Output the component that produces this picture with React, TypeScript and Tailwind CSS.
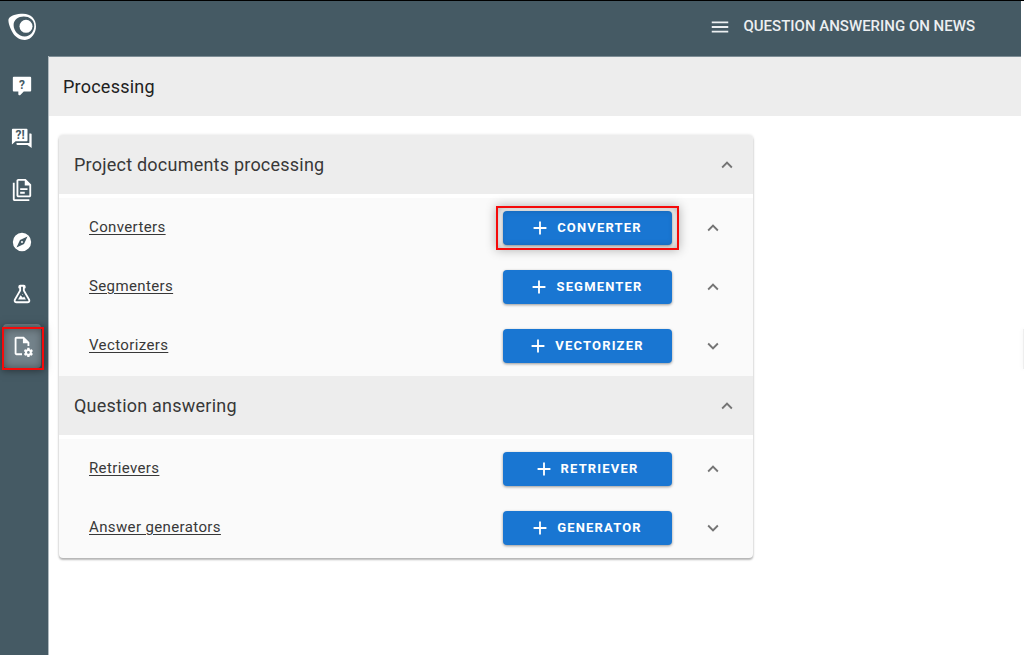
import React, { useState } from 'react';

interface StepItem { title: string; action: string; expanded: boolean; }
interface StepGroup { title: string; items: StepItem[]; }

const GROUPS: StepGroup[] = [
  { title: 'Project documents processing', items: [
    { title: 'Converters', action: 'Converter', expanded: true },
    { title: 'Segmenters', action: 'Segmenter', expanded: true },
    { title: 'Vectorizers', action: 'Vectorizer', expanded: false }
  ] },
  { title: 'Question answering', items: [
    { title: 'Retrievers', action: 'Retriever', expanded: true },
    { title: 'Answer generators', action: 'Generator', expanded: false }
  ] }
];

const ICONS = {
  menu: 'M3,6H21V8H3V6M3,11H21V13H3V11M3,16H21V18H3V16Z',
  plus: 'M19,13H13V19H11V13H5V11H11V5H13V11H19V13Z',
  up: 'M7.41,15.41L12,10.83L16.59,15.41L18,14L12,8L6,14L7.41,15.41Z',
  down: 'M7.41,8.58L12,13.17L16.59,8.58L18,10L12,16L6,10L7.41,8.58Z',
  comment: 'M3,2A1,1 0 0,0 2,3V17A1,1 0 0,0 3,18H8V21A1,1 0 0,0 9,22H9.5C9.75,22 10,21.9 10.2,21.71L13.9,18H21A1,1 0 0,0 22,17V3A1,1 0 0,0 21,2H3Z',
  forum: 'M2,2A1,1 0 0,0 1,3V19L5,15.500H17A1,1 0 0,0 18,14.500V3A1,1 0 0,0 17,2H2M20,7V17.500H6V18.500A1,1 0 0,0 7,19.500H18L22.500,23V8A1,1 0 0,0 21.500,7H20Z',
  documents: 'M16 0H8C6.9 0 6 .9 6 2V18C6 19.1 6.9 20 8 20H20C21.1 20 22 19.1 22 18V6L16 0M20 18H8V2H15V7H20V18M4 4V22H20V24H4C2.9 24 2 23.1 2 22V4H4M10 10V12H18V10H10M10 14V16H15V14H10Z',
  compass: 'M14.19,14.19L6,18L9.81,9.81L18,6M12,2A10,10 0 0,0 2,12A10,10 0 0,0 12,22A10,10 0 0,0 22,12A10,10 0 0,0 12,2M12,10.9A1.1,1.1 0 0,0 10.9,12A1.1,1.1 0 0,0 12,13.1A1.1,1.1 0 0,0 13.1,12A1.1,1.1 0 0,0 12,10.9Z',
  flask: 'M5,19A1,1 0 0,0 6,20H18A1,1 0 0,0 19,19C19,18.79 18.93,18.59 18.82,18.43L13,8.35V4H11V8.35L5.18,18.43C5.07,18.59 5,18.79 5,19M6,22A3,3 0 0,1 3,19C3,18.4 3.18,17.84 3.5,17.37L9,7.81V6A1,1 0 0,1 8,5V4A2,2 0 0,1 10,2H14A2,2 0 0,1 16,4V5A1,1 0 0,1 15,6V7.81L20.5,17.37C20.82,17.84 21,18.4 21,19A3,3 0 0,1 18,22H6M13,16L14.34,14.66L16.27,18H7.73L10.39,13.39L13,16M12.5,12A0.5,0.5 0 0,1 13,12.5A0.5,0.5 0 0,1 12.5,13A0.5,0.5 0 0,1 12,12.5A0.5,0.5 0 0,1 12.5,12Z',
  fileCog: 'M6 2C4.89 2 4 2.9 4 4V20C4 21.11 4.89 22 6 22H12V20H6V4H13V9H18V12H20V8L14 2M18 14C17.87 14 17.76 14.09 17.74 14.21L17.55 15.53C17.25 15.66 16.96 15.82 16.7 16L15.46 15.5C15.35 15.5 15.22 15.5 15.15 15.63L14.15 17.36C14.09 17.47 14.11 17.6 14.21 17.68L15.27 18.5C15.25 18.67 15.24 18.83 15.24 19C15.24 19.17 15.25 19.33 15.27 19.5L14.21 20.32C14.12 20.4 14.09 20.53 14.15 20.64L15.15 22.37C15.21 22.5 15.34 22.5 15.46 22.5L16.7 22C16.96 22.18 17.24 22.35 17.55 22.47L17.74 23.79C17.76 23.91 17.86 24 18 24H20C20.11 24 20.22 23.91 20.24 23.79L20.43 22.47C20.73 22.34 21 22.18 21.27 22L22.5 22.5C22.63 22.5 22.76 22.5 22.83 22.37L23.83 20.64C23.89 20.53 23.86 20.4 23.77 20.32L22.7 19.5C22.72 19.33 22.74 19.17 22.74 19C22.74 18.83 22.73 18.67 22.7 18.5L23.76 17.68C23.85 17.6 23.88 17.47 23.82 17.36L22.82 15.63C22.76 15.5 22.63 15.5 22.5 15.5L21.27 16C21 15.82 20.73 15.65 20.42 15.53L20.23 14.21C20.22 14.09 20.11 14 20 14H18M19 17.5C19.83 17.5 20.5 18.17 20.5 19C20.5 19.83 19.83 20.5 19 20.5C18.16 20.5 17.5 19.83 17.5 19C17.5 18.17 18.17 17.5 19 17.5Z'
};

interface IconProps { path: string; className?: string; children?: React.ReactNode; }

const Icon: React.FC<IconProps> = ({ path, className = 'size-[22px]', children }) => (
  <svg viewBox="0 0 24 24" fill="currentColor" className={`shrink-0 ${className}`} aria-hidden="true">
    <path d={path} />
    {children}
  </svg>
);

const Logo: React.FC = () => (
  <svg viewBox="0 0 28 28" className="size-7" aria-hidden="true">
    <path fill="white" fillRule="evenodd" d="M.6 6C2 2.500 9 .8 15 .8C23 .8 28 6 28 13.500C28 20 23.500 26.800 17 26.900C12 27 8 24.500 5.500 21C3 17 -.4 9.500 .6 6ZM5.600 12C5.600 18 10.500 23.400 16.800 23.400C22.500 23.400 26.300 18.500 26.300 12.800C26.300 7 21.500 3.600 15.800 3.600C10.200 3.600 5.600 7 5.600 12Z" />
    <circle cx="18" cy="13.300" r="6.500" fill="white" />
  </svg>
);

const NAV = [
  { label: 'Ask a question', path: ICONS.comment, mark: '?' },
  { label: 'Conversations', path: ICONS.forum, mark: '?!' },
  { label: 'Documents', path: ICONS.documents },
  { label: 'Explore', path: ICONS.compass },
  { label: 'Experiments', path: ICONS.flask },
  { label: 'Processing', path: ICONS.fileCog }
];

const Sidebar: React.FC = () => (
  <nav className="w-[49px] shrink-0 bg-[#455a64] border-r border-[#b0babf] flex flex-col items-center pt-2 pr-1 gap-2 text-white">
    {NAV.map((item) => {
      const active = item.label === 'Processing';
      return (
        <a key={item.label} href="#" aria-label={item.label} className={`relative w-[38px] h-11 rounded flex items-center justify-center ${active ? 'bg-[#73828a]' : ''}`}>
          <Icon path={item.path}>
            {item.mark && (
              <text x={item.mark === '?' ? 12 : 10} y={item.mark === '?' ? 15 : 13} textAnchor="middle" fontSize="13" className="fill-[#455a64] font-bold">{item.mark}</text>
            )}
          </Icon>
          {active && <span className="absolute -left-px top-[3px] w-[42px] h-[43px] border-2 border-[#f50a0a] shadow-[0_0_8px_rgba(0,0,0,0.5),inset_0_0_8px_rgba(0,0,0,0.4)]" />}
        </a>
      );
    })}
  </nav>
);

const App: React.FC = () => {
  const [open, setOpen] = useState<Record<string, boolean>>({ [GROUPS[0].title]: true, [GROUPS[1].title]: true });

  return (
    <div className="relative min-h-screen flex flex-col overflow-x-hidden bg-white border-t border-black font-['Roboto',sans-serif] text-[#383838]">
      <header className="h-[55px] mr-[3px] pl-2 pr-[46px] pb-1 bg-[#455a64] flex items-center justify-between text-white">
        <a href="#" aria-label="Home"><Logo /></a>
        <button className="flex items-center gap-3 text-[15px] font-medium uppercase text-[#eceff1]">
          <Icon path={ICONS.menu} />
          Question answering on news
        </button>
      </header>

      <div className="flex flex-1">
        <Sidebar />
        <main className="flex-1 min-w-0">
          <div className="h-[60px] mr-[3px] pl-[14px] bg-[#ededed] border-t border-[#7d8d95] flex items-center">
            <h1 className="text-lg tracking-[0.0125em] text-[#212121]">Processing</h1>
          </div>

          <div className="mt-[19px] ml-[10px] mr-4 max-w-[694px] rounded bg-[#fafafa] overflow-hidden shadow-[0_2px_2px_rgba(0,0,0,0.26),0_0_3px_rgba(0,0,0,0.14)]">
            {GROUPS.map((group) => (
              <section key={group.title}>
                <button onClick={() => setOpen({ ...open, [group.title]: !open[group.title] })} className="w-full h-[59px] px-[15px] bg-[#ededed] flex items-center justify-between">
                  <h2 className="text-lg tracking-[0.0125em]">{group.title}</h2>
                  <Icon path={open[group.title] ? ICONS.up : ICONS.down} className="size-[22px] text-[#757575]" />
                </button>
                {open[group.title] && (
                  <div className="border-t-4 border-white pb-px">
                    {group.items.map((item) => (
                      <div key={item.title} className="h-[59px] pl-[30px] pr-[29px] flex items-center">
                        <a href="#" className="flex-1 text-[15px] tracking-wide underline underline-offset-2">{item.title}</a>
                        <div className="relative mr-[30px]">
                          <button className="w-[169px] h-[34px] pr-1 rounded bg-[#1976d2] text-white text-[13px] font-bold uppercase tracking-[0.09em] flex items-center justify-center gap-[6px] shadow-[0_1px_3px_rgba(0,0,0,0.4)]">
                            <Icon path={ICONS.plus} />
                            {item.action}
                          </button>
                          {item.action === 'Converter' && <span className="absolute -inset-x-[7px] -inset-y-[5px] border-2 border-[#f50a0a] shadow-[0_0_10px_rgba(0,0,0,0.3),inset_0_0_8px_rgba(0,0,0,0.3)] pointer-events-none" />}
                        </div>
                        <button aria-label={`Toggle ${item.title}`} className="text-[#757575]">
                          <Icon path={item.expanded ? ICONS.up : ICONS.down} />
                        </button>
                      </div>
                    ))}
                  </div>
                )}
              </section>
            ))}
          </div>
        </main>
      </div>

      {/* edge of the closed side drawer */}
      <div className="absolute right-0 top-[328px] w-px h-10 bg-[#eeeeee] shadow-[0_0_4px_rgba(0,0,0,0.12)]" />
    </div>
  );
};

export default App;
